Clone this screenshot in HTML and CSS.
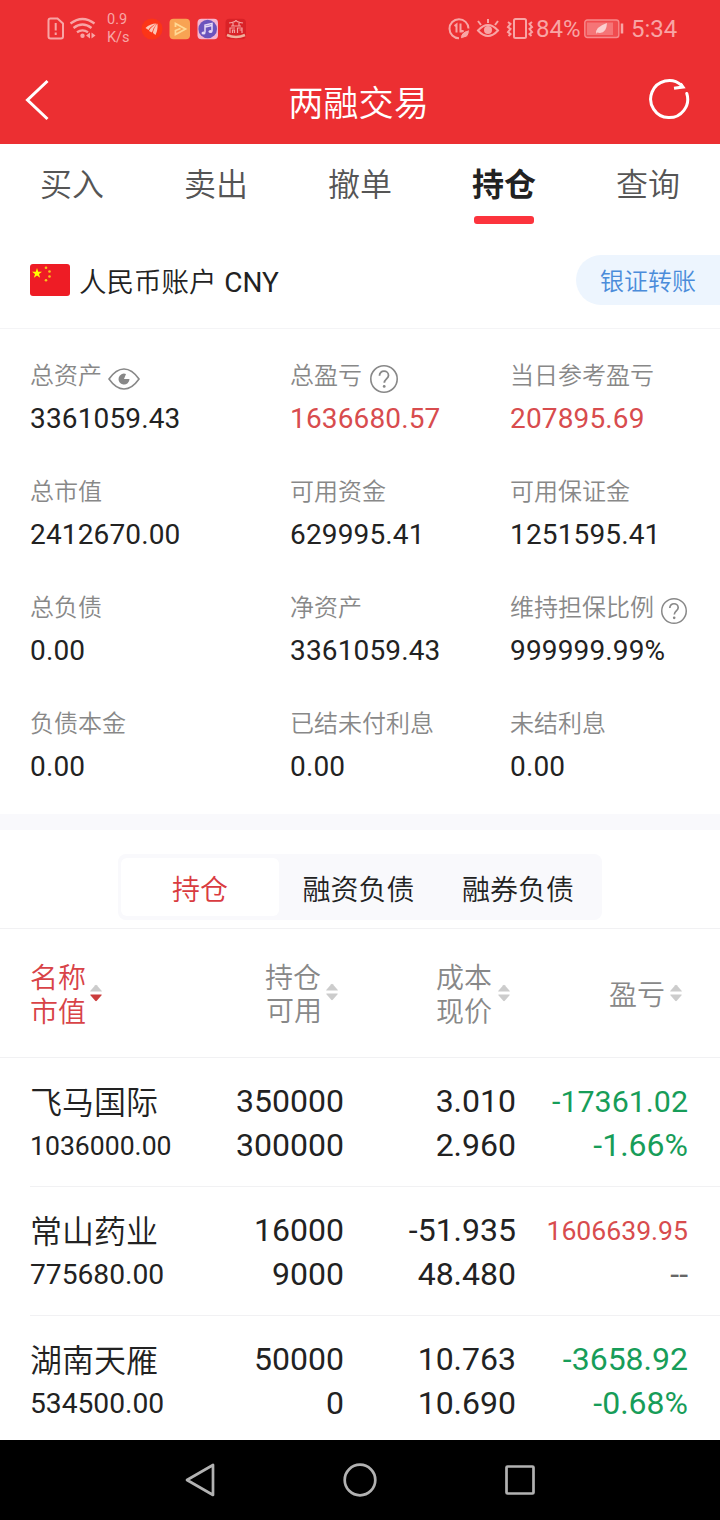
FILE: index.html
```html
<!DOCTYPE html>
<html lang="zh-CN">
<head>
<meta charset="utf-8">
<title>两融交易</title>
<link rel="stylesheet" href="styles.css">
</head>
<body>
<svg class="defs" width="0" height="0">
  <symbol id="help" viewBox="0 0 28 28"><circle cx="14" cy="14" r="13.2" fill="none" stroke="#888" stroke-width="1.6"/><path d="M9.5 10.8C9.5 7.9 11.5 6.2 14 6.2s4.5 1.7 4.5 4.2c0 3.2-4.2 3.7-4.2 7.400" fill="none" stroke="#888" stroke-width="1.8"/><circle cx="14.2" cy="21.4" r="1.4" fill="#888"/></symbol>
  <symbol id="sort" viewBox="0 0 14 18"><path d="M1.200 7 6.200 1.300Q7 .4 7.800 1.300L12.800 7Q13.200 7.500 12 7.500H2Q.8 7.500 1.200 7Z" fill="#ccc"/><path d="M1.200 11 6.200 16.700Q7 17.600 7.800 16.700L12.800 11Q13.200 10.500 12 10.500H2Q.8 10.500 1.200 11Z"/></symbol>
</svg>
<header class="top">
  <div class="status">
    <svg class="st-left" width="62" height="28" viewBox="0 0 62 28" fill="none" stroke="#f8a5a5" stroke-width="2">
      <path d="M6.500 3.500h7L19 8.500v13q0 2-2 2H6.500q-2 0-2-2v-16q0-2 2-2Z"/><path d="M11.700 8v7.500m0 2v2.500"/>
      <path d="M26.500 8.500Q38.500-.5 50.500 8.500M29.500 13q9-7 18 0M33 17.300q5.500-3.800 11 0" stroke-width="2.300"/><circle cx="38.500" cy="20.800" r="2.200" fill="#f8a5a5" stroke="none"/><path d="M46 17.500v6l-4-3Zm1.500 0v6l4-3Z" fill="#f8a5a5" stroke="none"/>
    </svg>
    <div class="speed"><span>0.9</span><span>K/s</span></div>
    <svg class="st-apps" width="106" height="22" viewBox="0 0 106 22">
      <circle cx="11" cy="11" r="10.500" fill="#fc3517"/><path d="M4.500 10Q9 5.500 15.500 5.500 9 8.500 7.500 12ZM8 13Q10 8.500 16 5.500 12 10 11 14.500ZM12 15Q12.500 10 16.500 5.500 17 12 14.500 17Z" fill="#fcc5b5"/>
      <rect x="28.500" y=".8" width="20.500" height="20.500" rx="4" fill="#f8a353"/><path d="M34.500 9V5.500l10 5.500-10 5.500V12.500l5-2" fill="none" stroke="#ffd994" stroke-width="1.800"/>
      <rect x="56.500" y=".8" width="20.500" height="20.500" rx="4" fill="#f5b5cf"/><circle cx="66.700" cy="11" r="9.300" fill="#6c54bd"/><path d="M64 14.500V7l7-1.500V13M64 9l7-1.500" fill="none" stroke="#e7d9f5" stroke-width="1.500"/><ellipse cx="62.500" cy="15" rx="2" ry="1.600" fill="#e7d9f5"/><ellipse cx="69.500" cy="13.500" rx="2" ry="1.600" fill="#e7d9f5"/>
      <rect x="84.500" y=".8" width="20.500" height="20.500" rx="4" fill="#d92227"/><path d="M88 5q7-1 7-3 0 2 7 3M90 8h10M92 5v3m6-3v3M89 15v-5h5m2 0h5v5M91.500 15v-3h2v3m3-5v5m2-3h2.500" fill="none" stroke="#f5a0a0" stroke-width="1.200"/><path d="M86 17q9 4 18 0" fill="none" stroke="#efb09c" stroke-width="2.500"/>
    </svg>
    <span class="grow"></span>
    <svg class="st-right" width="86" height="24" viewBox="0 0 86 24" fill="none" stroke="#f8a5a5" stroke-width="2">
      <path d="M20.500 11.500A9.500 9.500 0 1 0 11 21.200M6.500 9l2-1.500v8M12.500 6.500v8h3l-3-2"/><path d="M12.500 22q-1-7 9-9.500 0 8-6 8.500Z" fill="#f8a5a5" stroke="#ec2f32" stroke-width="1"/>
      <path d="M30 13.500q10-11 20 0-10 11-20 0Z"/><circle cx="40" cy="13" r="4" fill="#f8a5a5" stroke="none"/><path d="M40 6V2M33 8l-3-4m17 4 3-4"/>
      <rect x="66" y="2" width="12" height="19" rx="1.500"/><path d="m60 5 2.500 2-2.500 3 2.500 2-2.500 3 2.500 2-2 2M84 5l-2.500 2 2.500 3-2.500 2 2.500 3-2.500 2 2 2"/>
    </svg>
    <span class="pct">84%</span>
    <svg class="battery" width="40" height="20" viewBox="0 0 40 20"><rect x=".8" y="1" width="34" height="17.500" rx="2.500" fill="#f04c4f" stroke="#f7898b" stroke-width="1.400"/><rect x="3" y="3.500" width="26" height="12.500" fill="#f57577"/><path d="M12 15q-1-7 11-11-.5 12-10 9.500Z" fill="#fbd0d0"/><path d="M38 4.500v10" stroke="#f8a5a5" stroke-width="2.500"/></svg>
    <span class="clock">5:34</span>
  </div>
  <div class="title-bar">
    <svg width="28" height="44" viewBox="0 0 28 44"><path d="M24.500 3 4.500 22l20 19" fill="none" stroke="#fff" stroke-width="3"/></svg>
    <h1>两融交易</h1>
    <svg class="refresh" width="44" height="44" viewBox="0 0 44 44" fill="none" stroke="#fff" stroke-width="3"><path d="M39.800 16.500A18.500 18.500 0 1 1 34.500 8.300" stroke-linecap="round"/><path d="M33.500 6.500l2.500 3.500-9 1.300"/></svg>
  </div>
</header>
<nav class="tabs"><span>买入</span><span>卖出</span><span>撤单</span><span class="active">持仓</span><span>查询</span></nav>
<section class="account">
  <svg width="40" height="32" viewBox="0 0 40 32"><rect width="40" height="32" rx="3" fill="#ee1c25"/><path d="m7 4 1.200 3.700H12L9 10l1.100 3.700L7 11.400l-3.100 2.300L5 10 2 7.700h3.800Z" fill="#ff0"/><g fill="#f8c51c"><circle cx="16" cy="3.800" r="1.300"/><circle cx="19.500" cy="7.500" r="1.300"/><circle cx="19.500" cy="12.500" r="1.300"/><circle cx="16" cy="16.300" r="1.300"/></g></svg>
  <span class="account-name">人民币账户 <span class="code">CNY</span></span>
  <span class="transfer">银证转账</span>
</section>
<section class="summary">
  <div><label>总资产<svg class="eye" width="32" height="22" viewBox="0 0 32 22"><path d="M1 11Q8 1 16 1t15 10q-7 10-15 10T1 11Z" fill="none" stroke="#888" stroke-width="1.600"/><path d="M16 11l2-5.100A5.500 5.500 0 1 0 21.500 11Z" fill="#888"/></svg></label><b>3361059.43</b></div>
  <div><label>总盈亏<svg class="help"><use href="#help"/></svg></label><b class="red">1636680.57</b></div>
  <div><label>当日参考盈亏</label><b class="red">207895.69</b></div>
  <div><label>总市值</label><b>2412670.00</b></div>
  <div><label>可用资金</label><b>629995.41</b></div>
  <div><label>可用保证金</label><b>1251595.41</b></div>
  <div><label>总负债</label><b>0.00</b></div>
  <div><label>净资产</label><b>3361059.43</b></div>
  <div><label>维持担保比例<svg class="help small"><use href="#help"/></svg></label><b>999999.99%</b></div>
  <div><label>负债本金</label><b>0.00</b></div>
  <div><label>已结未付利息</label><b>0.00</b></div>
  <div><label>未结利息</label><b>0.00</b></div>
</section>
<section class="switcher"><div class="segments"><span class="active">持仓</span><span>融资负债</span><span>融券负债</span></div></section>
<section class="columns head">
  <div class="sorted"><p>名称<br>市值</p><svg><use href="#sort"/></svg></div>
  <div class="qty"><p>持仓<br><span class="shift">可用</span></p><svg><use href="#sort"/></svg></div>
  <div><p>成本<br>现价</p><svg><use href="#sort"/></svg></div>
  <div class="profit"><p>盈亏</p><svg><use href="#sort"/></svg></div>
</section>
<main>
  <article class="columns row"><div><span>飞马国际</span><span class="f26">1036000.00</span></div><div><span>350000</span><span>300000</span></div><div><span>3.010</span><span>2.960</span></div><div class="green"><span class="f30">-17361.02</span><span>-1.66%</span></div></article>
  <article class="columns row"><div><span>常山药业</span><span class="f28">775680.00</span></div><div><span>16000</span><span>9000</span></div><div><span>-51.935</span><span>48.480</span></div><div><span class="f26 red">1606639.95</span><span class="none">--</span></div></article>
  <article class="columns row"><div><span>湖南天雁</span><span class="f28">534500.00</span></div><div><span>50000</span><span>0</span></div><div><span>10.763</span><span>10.690</span></div><div class="green"><span>-3658.92</span><span>-0.68%</span></div></article>
</main>
<footer class="system-nav">
  <svg width="32" height="36" viewBox="0 0 32 36"><path d="M29 3v30L3 18Z"/></svg>
  <svg width="36" height="36" viewBox="0 0 36 36"><circle cx="18" cy="18" r="15.300"/></svg>
  <svg width="32" height="32" viewBox="0 0 32 32"><rect x="2.500" y="2.500" width="27" height="27" rx="1"/></svg>
</footer>
</body>
</html>
```
FILE: styles.css
```css
* { box-sizing: border-box; }
body { margin: 0; width: 720px; height: 1520px; overflow: hidden; display: flex; flex-direction: column; background: #fff; color: #222; font-family: Roboto, "Noto Sans CJK SC", sans-serif; }
body > * { flex: none; }
svg { flex: none; display: block; }
.defs { position: absolute; }
.top { height: 144px; background: #ec2f32; }
.status { height: 58px; display: flex; align-items: center; padding-left: 44px; padding-right: 43px; color: #f8a5a5; }
.speed { width: 35px; display: flex; flex-direction: column; font-size: 14.5px; line-height: 18px; padding-left: 1px; }
.grow { flex: 1; }
.st-right { margin: 0 2px 0 0; }
.pct { font-size: 24px; width: 48px; }
.battery { margin: 0 7px 0 0; }
.clock { font-size: 24px; width: 46px; }
.title-bar { height: 84px; display: flex; align-items: center; justify-content: space-between; padding: 0 28px 0 23px; }
.title-bar h1 { margin: 7px 0 0 18px; font-size: 35.2px; line-height: 44px; font-weight: 350; color: #fff; }
.title-bar .refresh { margin: -3px 1px 0 -1px; }
.tabs { height: 90px; display: grid; grid-template-columns: repeat(5, 1fr); font-size: 32px; color: #555; }
.tabs span { display: flex; flex-direction: column; align-items: center; line-height: 46px; padding-top: 18px; font-weight: 350; }
.tabs .active { font-weight: 700; color: #222; }
.tabs .active::after { content: ""; width: 60px; height: 8px; margin-top: 8px; border-radius: 3px; background: #fc343d; }
.account { height: 95px; display: flex; align-items: center; padding: 0 0 2px 30px; border-bottom: 1px solid #f4f4f6; }
.account-name { margin-left: 9px; font-size: 27.5px; flex: 1; font-weight: 350; }
.code { font-weight: 400; font-size: 28px; margin-left: 1px; }
.transfer { width: 144px; height: 50px; padding-left: 24px; border-radius: 25px 0 0 25px; background: #edf5fe; color: #4b8cda; font-size: 24px; line-height: 54px; font-weight: 350; }
.summary { height: 485px; padding: 27px 0 0 30px; display: grid; grid-template-columns: 260px 220px 210px; grid-auto-rows: 116px; }
.summary label { display: flex; align-items: center; height: 35px; font-size: 24px; color: #888; font-weight: 350; }
.summary b { display: block; height: 50px; line-height: 50px; margin-top: 3px; font-size: 28px; font-weight: 400; letter-spacing: .15px; }
.eye { margin: 11px 0 0 6px; }
.help { width: 28px; height: 28px; margin: 11px 0 0 8px; }
.help.small { width: 26px; height: 26px; margin-left: 7px; }
.red { color: #d84c4e; }
.green { color: #179d59; }
.switcher { height: 115px; padding: 24px 118px 0; border-top: 16px solid #f9f9fc; border-bottom: 1px solid #f1f1f3; }
.segments { height: 66px; padding: 4px 4px 4px 3px; display: grid; grid-template-columns: 158px 160px 1fr; border-radius: 8px; background: #f9f9fc; font-size: 28px; text-align: center; line-height: 66px; font-weight: 350; }
.segments span { height: 58px; margin-left: -1px; }
.segments .active { background: #fff; border-radius: 6px; color: #d93b40; margin-left: 0; }
.columns { display: grid; grid-template-columns: 142px 172px 172px 172px; }
.head { height: 129px; padding-left: 30px; border-bottom: 1px solid #f1f1f3; color: #888; font-size: 28px; line-height: 34px; font-weight: 350; }
.head div { display: flex; align-items: center; justify-content: flex-end; padding-right: 5px; gap: 5px; }
.head p { margin: 0; padding-top: 5px; text-align: right; }
.head .qty p { line-height: 33px; padding-top: 3px; }
.head .qty, .head .profit { gap: 4px; }
.shift { margin-right: -1px; }
.head svg { width: 14px; height: 18px; fill: #ccc; }
.head .qty svg { margin-top: -2px; }
.head .sorted { justify-content: flex-start; gap: 3px; color: #d84347; }
.head .sorted svg { fill: #cb3d3d; }
.row { margin-left: 30px; height: 129px; padding-top: 21px; border-bottom: 1px solid #f1f1f3; font-size: 32px; }
.row div { display: flex; flex-direction: column; text-align: right; }
.row div:first-child { text-align: left; white-space: nowrap; }
.row span { height: 44px; line-height: 44px; }
.row div:first-child span:first-child { font-weight: 350; line-height: 49px; }
.row .f26 { font-size: 26.6px; line-height: 45px; }
.row .f28 { font-size: 28.2px; line-height: 45px; }
.row .f30 { font-size: 30.4px; line-height: 45px; }
.none { color: #666; }
main { height: 382px; overflow: hidden; }
.system-nav { height: 80px; background: #000; display: flex; align-items: center; justify-content: space-between; padding: 0 184px; }
.system-nav svg { fill: none; stroke: #b2b2b2; stroke-width: 2.7; stroke-linejoin: round; }
```
